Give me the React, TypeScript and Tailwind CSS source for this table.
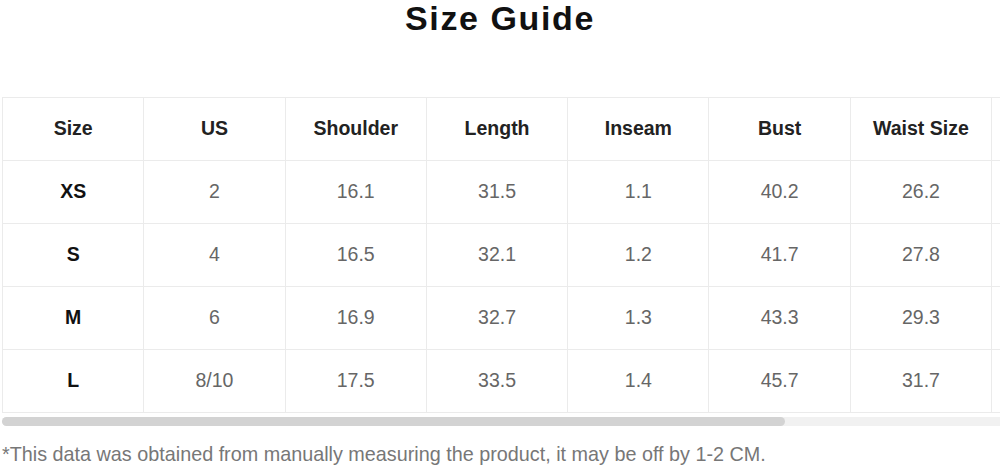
const columns = ["Size", "US", "Shoulder", "Length", "Inseam", "Bust", "Waist Size", ""];

const rows = [
    ["XS", "2", "16.1", "31.5", "1.1", "40.2", "26.2", ""],
    ["S", "4", "16.5", "32.1", "1.2", "41.7", "27.8", ""],
    ["M", "6", "16.9", "32.7", "1.3", "43.3", "29.3", ""],
    ["L", "8/10", "17.5", "33.5", "1.4", "45.7", "31.7", ""],
];

export default function App() {
    return (
        <div className="w-[1000px] h-[469px] bg-white overflow-hidden font-['Liberation_Sans',Arial,sans-serif]">
            <h1 className="text-center font-bold text-[34px] leading-[36px] text-[#111] tracking-[1.6px]">Size Guide</h1>

            <div className="mt-[61px] pl-[2px] overflow-hidden">
                <table className="table-fixed border-collapse w-[1131px]">
                    <thead>
                        <tr className="h-[63px]">
                            {columns.map((c, i) => (
                                <th key={i} className="w-[141.3px] border border-[#ebebeb] text-[19.5px] font-bold text-[#222] text-center">
                                    {c}
                                </th>
                            ))}
                        </tr>
                    </thead>
                    <tbody>
                        {rows.map((r) => (
                            <tr key={r[0]} className="h-[63px]">
                                {r.map((v, i) => (
                                    <td
                                        key={i}
                                        className={`border border-[#ebebeb] text-[19.5px] text-center ${i === 0 ? 'font-bold text-[#111]' : 'text-[#666]'}`}
                                    >
                                        {v}
                                    </td>
                                ))}
                            </tr>
                        ))}
                    </tbody>
                </table>
            </div>

            {/* scrollbar */}
            <div className="mt-[4px] ml-[2px] h-[9px] bg-[#f1f1f1] rounded-l-full">
                <div className="w-[783px] h-full bg-[#d3d3d3] rounded-full" />
            </div>

            <p className="mt-[19px] pl-[2px] text-[19.8px] leading-none text-[#777]">
                *This data was obtained from manually measuring the product, it may be off by 1-2 CM.
            </p>
        </div>
    )
}
